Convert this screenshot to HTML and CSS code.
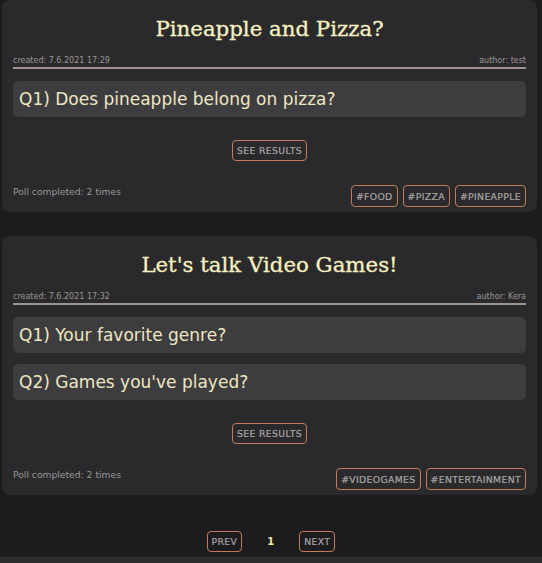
FILE: index.html
```html
<!DOCTYPE html>
<html>
<head>
<meta charset="utf-8">
<link rel="stylesheet" href="styles.css">
</head>
<body>
<div class="page">
  <div class="list">
    <section class="card">
      <h2 class="title">Pineapple and Pizza?</h2>
      <div class="meta"><span>created: 7.6.2021 17:29</span><span>author: test</span></div>
      <div class="questions">
        <div class="question">Q1) Does pineapple belong on pizza?</div>
      </div>
      <div class="actions"><button class="btn">SEE RESULTS</button></div>
      <div class="footer">
        <span class="count">Poll completed: 2 times</span>
        <div class="tags"><span class="btn tag">#FOOD</span><span class="btn tag">#PIZZA</span><span class="btn tag">#PINEAPPLE</span></div>
      </div>
    </section>
    <section class="card">
      <h2 class="title">Let's talk Video Games!</h2>
      <div class="meta"><span>created: 7.6.2021 17:32</span><span>author: Kera</span></div>
      <div class="questions">
        <div class="question">Q1) Your favorite genre?</div>
        <div class="question">Q2) Games you've played?</div>
      </div>
      <div class="actions"><button class="btn">SEE RESULTS</button></div>
      <div class="footer">
        <span class="count">Poll completed: 2 times</span>
        <div class="tags"><span class="btn tag">#VIDEOGAMES</span><span class="btn tag">#ENTERTAINMENT</span></div>
      </div>
    </section>
  </div>
  <nav class="pager">
    <button class="btn">PREV</button>
    <span class="current">1</span>
    <button class="btn">NEXT</button>
  </nav>
  <div class="bottom-bar"></div>
</div>
</body>
</html>
```

FILE: styles.css
```css
* { box-sizing: border-box; }
html, body { margin: 0; padding: 0; background: #1c1c1e; }
body { font-family: "DejaVu Sans", sans-serif; height: 563px; overflow: hidden; }
.page { display: flex; flex-direction: column; height: 563px; }
.list { display: flex; flex-direction: column; gap: 24px; padding: 0 5px 0 2px; }
.card {
  background: #2a2a2c;
  border-radius: 8px;
  padding: 14px 11px 5px;
  display: flex;
  flex-direction: column;
}
.title {
  margin: 0;
  text-align: center;
  font-family: "DejaVu Serif", serif;
  font-weight: normal;
  font-size: 21.3px;
  line-height: 30px;
  color: #f6f0c0;
  -webkit-text-stroke: 0.3px #f6f0c0;
}
.meta {
  margin-top: 11px;
  display: flex;
  justify-content: space-between;
  font-size: 8px;
  line-height: 12px;
  color: #9c9696;
  border-bottom: 2px solid #a09492;
}
.questions { margin-top: 12px; display: flex; flex-direction: column; gap: 11px; }
.question {
  height: 36px;
  background: #3d3d3f;
  border-radius: 5px;
  padding: 0 6px;
  display: flex;
  align-items: center;
  font-size: 17px;
  color: #eee6c2;
}
.actions { margin-top: 23px; display: flex; justify-content: center; }
.btn {
  font-family: "DejaVu Sans", sans-serif;
  height: 21px;
  padding: 0 4px;
  border: 1.5px solid #c47b58;
  border-radius: 4px;
  background: transparent;
  color: #aaa5a5;
  font-size: 9.3px;
  letter-spacing: 0.35px;
  -webkit-text-stroke: 0.2px #aaa5a5;
  display: inline-flex;
  align-items: center;
  justify-content: center;
  margin: 0;
}
.footer { margin-top: 24px; display: flex; justify-content: space-between; align-items: flex-start; }
.count { font-size: 9.2px; color: #9c9696; padding-top: 1px; line-height: 12px; }
.tags { display: flex; gap: 5px; }
.tag { height: 22px; }
.pager {
  margin-top: 36px;
  display: flex;
  justify-content: center;
  align-items: center;
  gap: 25px;
}
.current { color: #f2e7a4; font-size: 10px; font-weight: bold; }
.bottom-bar { margin-top: auto; height: 6px; background: #2d2d2f; }
```
